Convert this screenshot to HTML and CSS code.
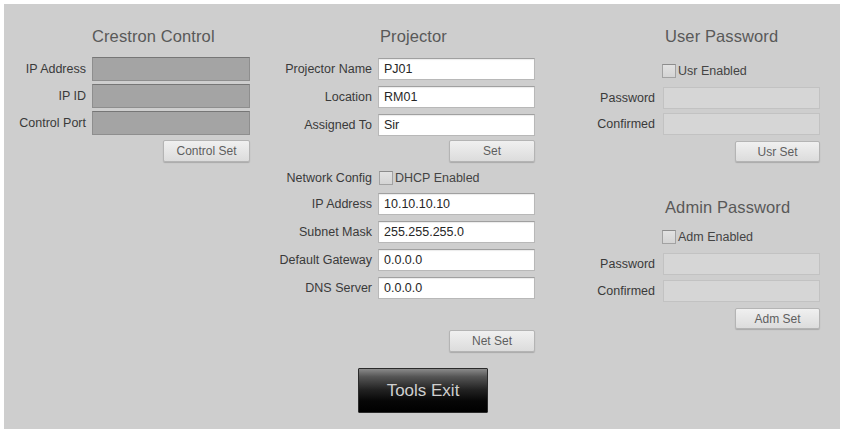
FILE: index.html
```html
<!DOCTYPE html>
<html>
<head>
<meta charset="utf-8">
<link rel="stylesheet" href="styles.css">
</head>
<body>
<div class="panel">
  <section class="col col-crestron">
    <h2 class="title">Crestron Control</h2>
    <div class="rows">
      <div class="row"><span class="lbl">IP Address</span><span class="field dark"></span></div>
      <div class="row"><span class="lbl">IP ID</span><span class="field dark"></span></div>
      <div class="row"><span class="lbl">Control Port</span><span class="field dark"></span></div>
    </div>
    <div class="btn-row btn-row-c"><span class="btn">Control Set</span></div>
  </section>

  <section class="col col-proj">
    <h2 class="title">Projector</h2>
    <div class="rows">
      <div class="row"><span class="lbl">Projector Name</span><span class="field">PJ01</span></div>
      <div class="row"><span class="lbl">Location</span><span class="field">RM01</span></div>
      <div class="row"><span class="lbl">Assigned To</span><span class="field">Sir</span></div>
    </div>
    <div class="btn-row btn-row-set"><span class="btn">Set</span></div>
    <div class="row net-row"><span class="lbl">Network Config</span><span class="check-wrap"><span class="check"></span><span class="check-text">DHCP Enabled</span></span></div>
    <div class="rows net-rows">
      <div class="row"><span class="lbl">IP Address</span><span class="field">10.10.10.10</span></div>
      <div class="row"><span class="lbl">Subnet Mask</span><span class="field">255.255.255.0</span></div>
      <div class="row"><span class="lbl">Default Gateway</span><span class="field">0.0.0.0</span></div>
      <div class="row"><span class="lbl">DNS Server</span><span class="field">0.0.0.0</span></div>
    </div>
    <div class="btn-row btn-row-net"><span class="btn">Net Set</span></div>
    <div class="exit-btn">Tools Exit</div>
  </section>

  <section class="col col-pass">
    <h2 class="title">User Password</h2>
    <div class="check-row"><span class="check"></span><span class="check-text">Usr Enabled</span></div>
    <div class="rows pass-rows">
      <div class="row"><span class="lbl">Password</span><span class="field light"></span></div>
      <div class="row"><span class="lbl">Confirmed</span><span class="field light"></span></div>
    </div>
    <div class="btn-row btn-row-pass"><span class="btn">Usr Set</span></div>

    <h2 class="title title-admin">Admin Password</h2>
    <div class="check-row check-row-admin"><span class="check"></span><span class="check-text">Adm Enabled</span></div>
    <div class="rows pass-rows">
      <div class="row"><span class="lbl">Password</span><span class="field light"></span></div>
      <div class="row row-gap5"><span class="lbl">Confirmed</span><span class="field light"></span></div>
    </div>
    <div class="btn-row btn-row-pass"><span class="btn">Adm Set</span></div>
  </section>
</div>
</body>
</html>
```
FILE: styles.css
```css
html, body {
  margin: 0;
  padding: 0;
  background: #ffffff;
}

body {
  font-family: "Liberation Sans", Arial, sans-serif;
  color: #333;
}

.panel {
  margin: 4px 3px 0 4px;
  height: 425px;
  box-sizing: border-box;
  padding-top: 22px;
  background: #cecece;
  display: flex;
}

.col {
  display: flex;
  flex-direction: column;
}

.col-crestron { width: 258px; }
.col-proj { width: 283px; }
.col-pass { flex: 1; }

.title {
  margin: 0;
  font-size: 16.5px;
  line-height: 20px;
  font-weight: normal;
  color: #595959;
  letter-spacing: 0.1px;
}

.col-crestron .title { margin-left: 88px; }
.col-proj .title { margin-left: 118px; }
.col-pass .title { margin-left: 120px; }

.rows {
  display: flex;
  flex-direction: column;
}

.row {
  display: flex;
  align-items: center;
}

.lbl {
  text-align: right;
  font-size: 12.5px;
  color: #3a3a3a;
  white-space: nowrap;
}

.field {
  box-sizing: border-box;
  display: flex;
  align-items: center;
  padding-left: 5px;
  font-size: 12.5px;
  color: #262626;
  background: #ffffff;
  border: 1px solid #b8b8b8;
  border-top-color: #a0a0a0;
  box-shadow: inset 0 1px 1px rgba(0,0,0,0.08);
}

.field.dark {
  background: #a4a4a4;
  border: 1px solid #8e8e8e;
  border-top-color: #767676;
  box-shadow: none;
}

.field.light {
  background: #d6d6d6;
  border: 1px solid #c2c2c2;
  box-shadow: none;
}

/* Crestron column */
.col-crestron .rows { margin-top: 11px; gap: 3px; }
.col-crestron .lbl { width: 82px; margin-right: 6px; }
.col-crestron .field { width: 158px; height: 24px; }
.btn-row-c { width: 246px; margin-top: 5px; }
.btn-row-c .btn { width: 87px; height: 22px; }

/* Projector column */
.col-proj .rows { gap: 6px; }
.col-proj > .rows:first-of-type { margin-top: 12px; }
.col-proj .lbl { width: 110px; margin-right: 6px; }
.col-proj .field { width: 157px; height: 22px; }
.btn-row-set { width: 273px; margin-top: 4px; }
.btn-row-net { width: 273px; margin-top: 31px; }
.btn-row-set .btn, .btn-row-net .btn { width: 86px; height: 22px; }
.net-row { margin-top: 7px; height: 18px; }
.net-rows { margin-top: 6px; }

/* Password column */
.col-pass .lbl { width: 110px; margin-right: 8px; }
.col-pass .field { width: 157px; height: 22px; }
.pass-rows { margin-top: 9px; gap: 4px; }
.row-gap5 { margin-top: 1px; }
.btn-row-pass { width: 275px; margin-top: 6px; }
.btn-row-pass .btn { width: 85px; height: 21px; }
.title-admin { margin-top: 35px; }

.check-row {
  display: flex;
  align-items: center;
  height: 14px;
  margin-top: 18px;
  padding-left: 117px;
}
.check-row-admin { margin-top: 13px; }

.check-wrap {
  display: flex;
  align-items: center;
  margin-left: 1px;
}

.check {
  box-sizing: border-box;
  display: inline-block;
  width: 14px;
  height: 14px;
  border: 1px solid #a2a2a2;
  border-top-color: #8c8c8c;
  background: linear-gradient(#e2e2e2, #d4d4d4);
  margin-right: 2px;
}

.check-text {
  font-size: 12.5px;
  color: #444;
}

/* Buttons */
.btn-row {
  display: flex;
  justify-content: flex-end;
}

.btn {
  box-sizing: border-box;
  display: flex;
  align-items: center;
  justify-content: center;
  font-size: 12px;
  color: #5e5e5e;
  background: linear-gradient(#f0f0f0, #dcdcdc);
  border: 1px solid #b4b4b4;
  border-radius: 2px;
  box-shadow: 0 1px 1px rgba(0,0,0,0.18);
}

.exit-btn {
  box-sizing: border-box;
  margin-top: 16px;
  margin-left: 96px;
  width: 130px;
  height: 45px;
  display: flex;
  align-items: center;
  justify-content: center;
  font-size: 17px;
  color: #cfcfcf;
  background: linear-gradient(#8a8a8a 0%, #555 18%, #222 48%, #060606 75%, #000 100%);
  border: 1px solid #2a2a2a;
  border-radius: 1px;
}
```
